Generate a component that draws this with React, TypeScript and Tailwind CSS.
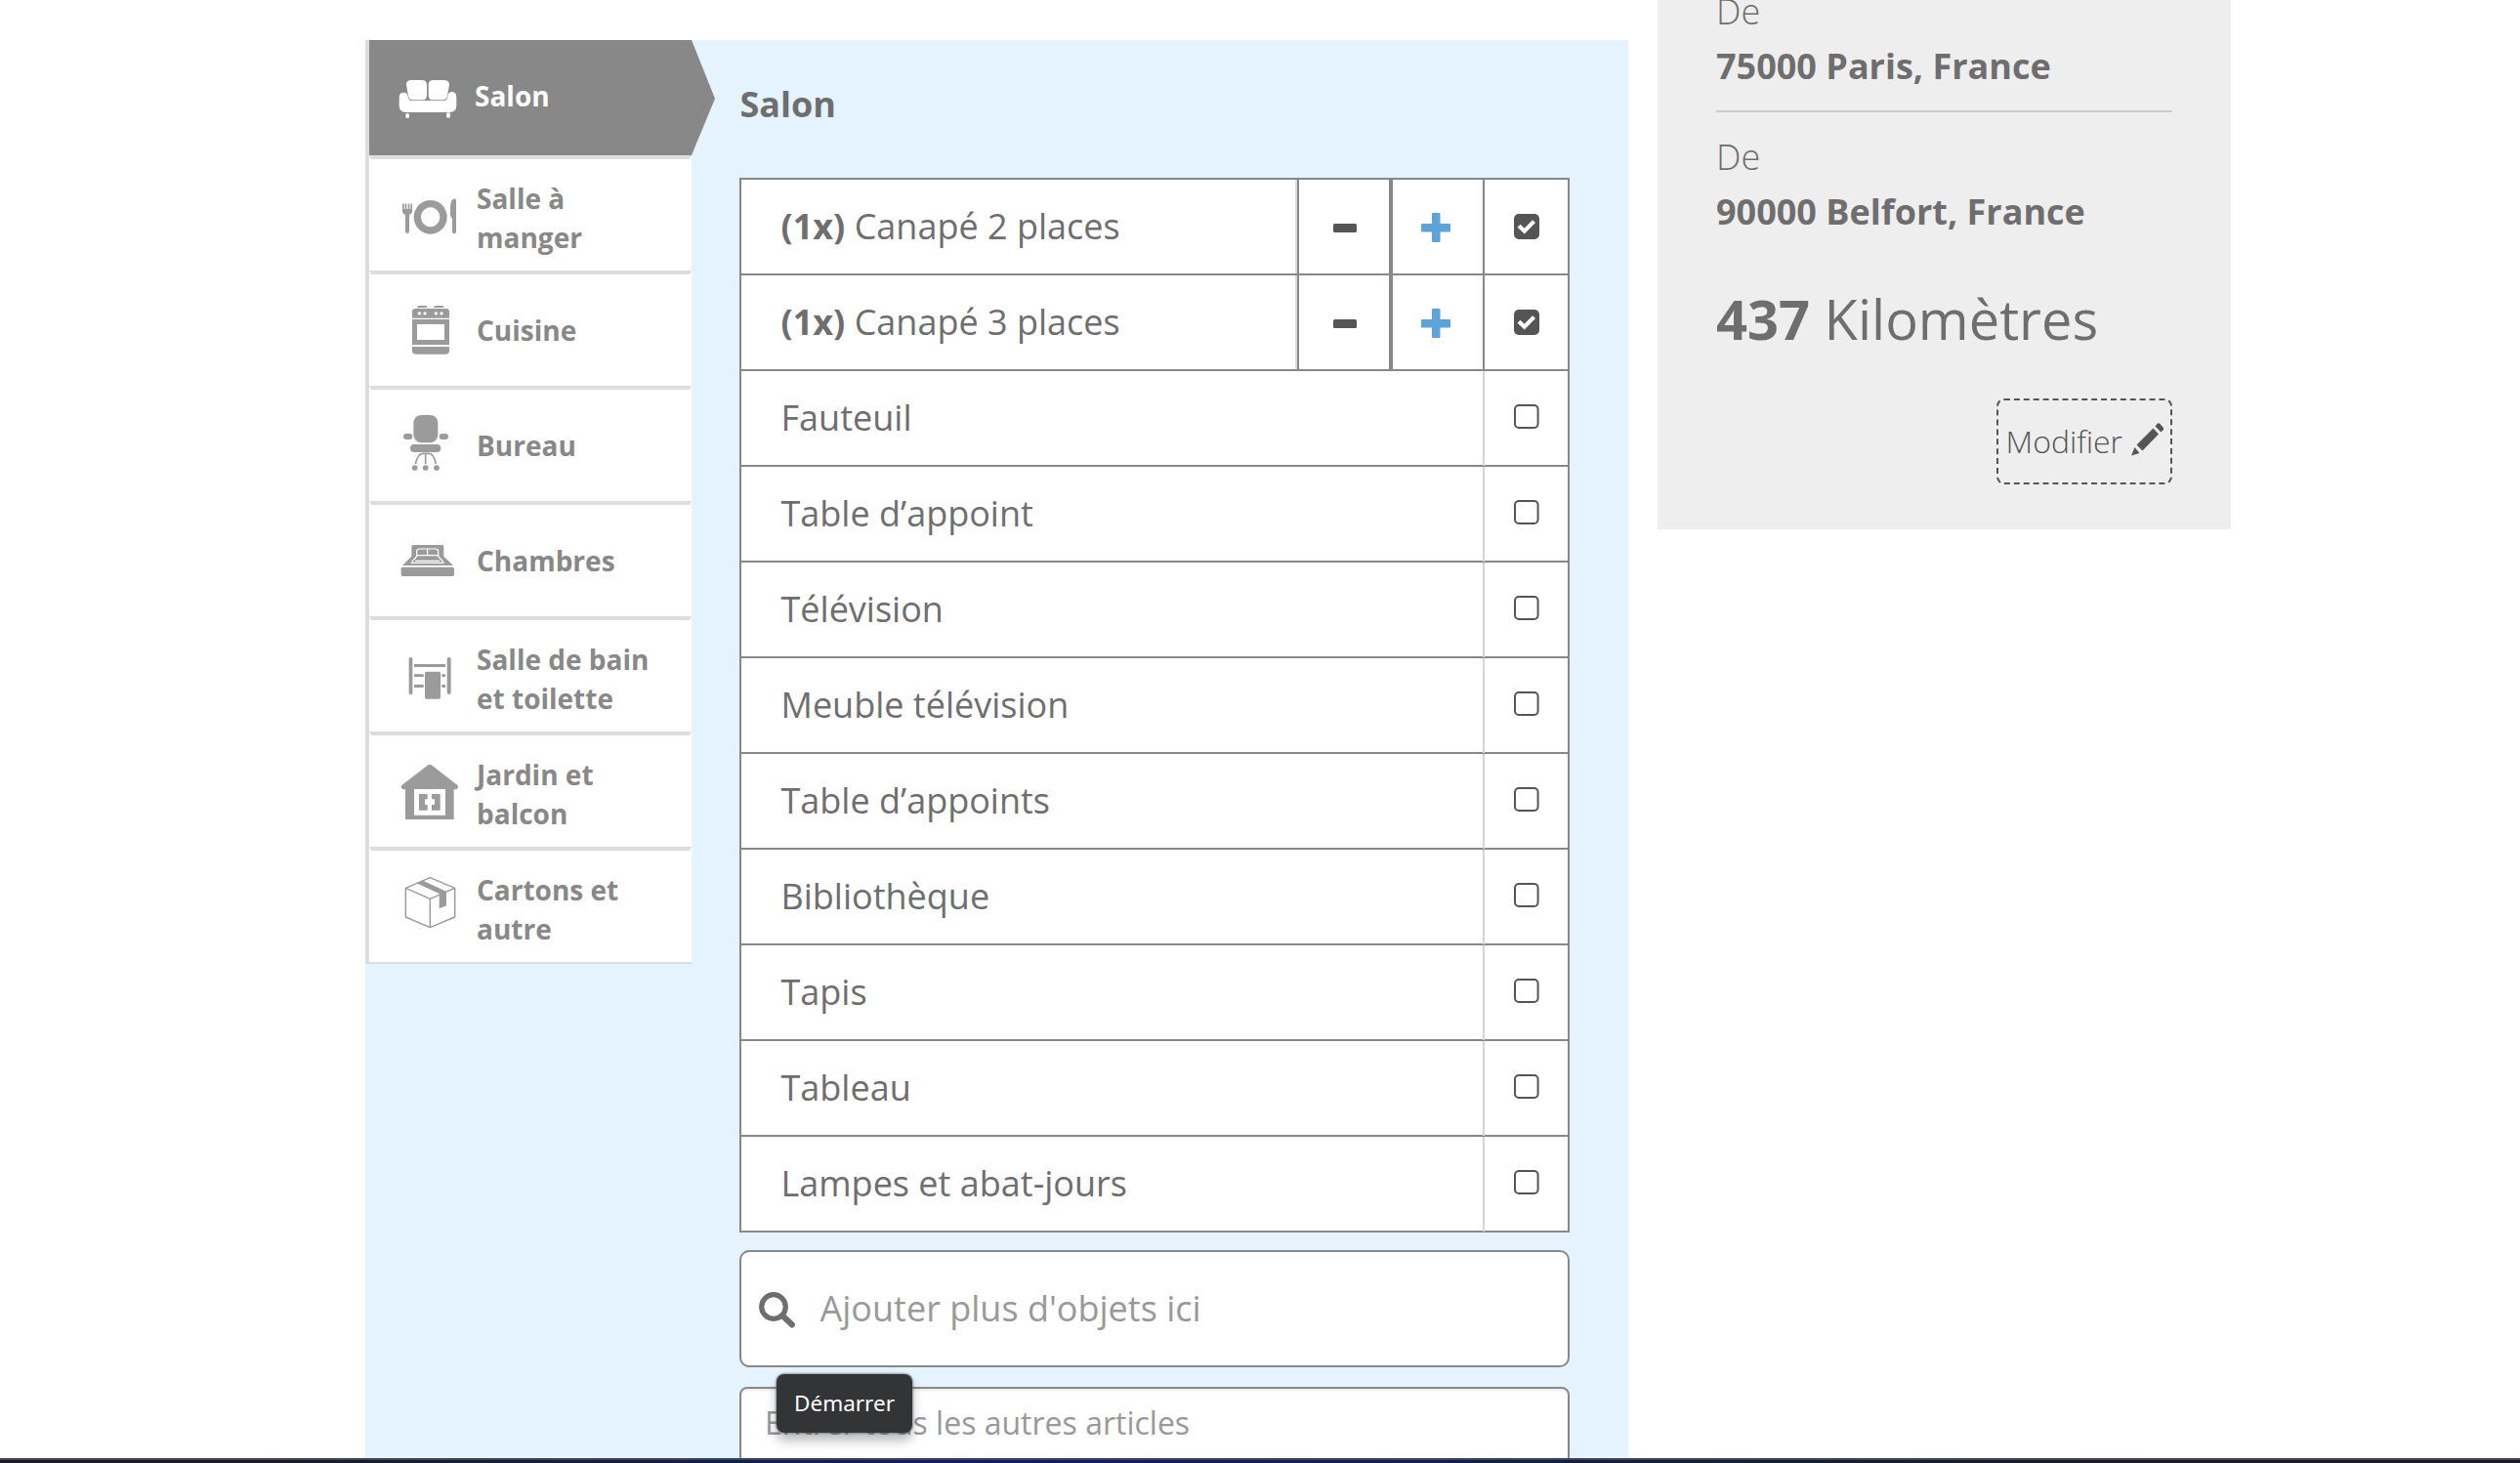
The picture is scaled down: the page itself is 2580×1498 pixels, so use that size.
import type { ReactNode } from "react";

type Room = { label: string[]; icon: ReactNode; viewBox: string };

const rooms: Room[] = [
  {
    label: ["Salle à", "manger"],
    viewBox: "90 399 270 342",
    icon: (
      <>
        <path d="M144 537q3-4 5 0v15h3v-15q3-4 5 0v15h4v-15q3-4 5 0v15h3v-15q3-4 5 0v22q0 8-9 11v52q-1 5-6 5t-6-5v-52q-9-3-9-11z" />
        <path fillRule="evenodd" d="M230 525a51 52 0 1 0 .1 0zM230 547a29 30 0 1 1-.1 0z" />
        <path d="M309 525v97q-1 6-6 6t-6-6v-41q-6-4-6-12v-20q0-26 11-28 7-1 7 4z" />
      </>
    ),
  },
  {
    label: ["Cuisine"],
    viewBox: "90 33 270 342",
    icon: (
      <>
        <path d="M189 135q1-6 6-6h20q5 0 6 6zM240 135q1-6 6-6h20q5 0 6 6z" />
        <path
          fillRule="evenodd"
          d="M184 138h94q10 0 10 10v19H174v-19q0-10 10-10zM196 148a5 5 0 1 0 .1 0zM213 148a5 5 0 1 0 .1 0zM247 148a5 5 0 1 0 .1 0zM264 148a5 5 0 1 0 .1 0zM174 171h114v78H174zM189 186v48h84v-48z"
        />
        <path d="M174 255h114v13q0 10-10 10h-94q-10 0-10-10z" />
      </>
    ),
  },
  {
    label: ["Bureau"],
    viewBox: "90 387 270 342",
    icon: (
      <>
        <rect x="178" y="465" width="75" height="85" rx="24" />
        <rect x="147" y="522" width="28" height="18" rx="9" />
        <rect x="257" y="522" width="28" height="18" rx="9" />
        <rect x="168" y="555" width="94" height="24" rx="12" />
        <path
          d="M184 615q8-32 22-32h20q14 0 21 32M215 583v32"
          fill="none"
          stroke="currentColor"
          strokeWidth="5"
        />
        <circle cx="182" cy="627" r="8.5" />
        <circle cx="215" cy="627" r="8.5" />
        <circle cx="249" cy="627" r="8.5" />
      </>
    ),
  },
  {
    label: ["Chambres"],
    viewBox: "90 51 270 342",
    icon: (
      <>
        <path d="M172 179q0-5 5-5h89q5 0 5 5v30l29 28H144l28-28z" />
        <path
          d="M170 229h102M173 226l15-17v-16q0-7 9-7h48q9 0 9 7v16l16 17M183 223h76M188 206h66M221 187v18"
          fill="none"
          stroke="#fff"
          strokeWidth="3.5"
        />
        <path d="M174 231h96v6h-96z" />
        <rect x="140" y="242" width="163" height="28" rx="5" />
      </>
    ),
  },
  {
    label: ["Salle de bain", "et toilette"],
    viewBox: "90 405 270 342",
    icon: (
      <>
        <rect x="164" y="519" width="11" height="114" rx="5.5" />
        <rect x="281" y="519" width="12" height="114" rx="6" />
        <path d="M180 540h96v9h-96zM180 571h29v8h-29zM180 603h29v9h-29zM265 571h11v8h-11zM265 603h11v9h-11z" />
        <rect x="213" y="563" width="48" height="84" rx="5" />
      </>
    ),
  },
  {
    label: ["Jardin et", "balcon"],
    viewBox: "90 39 270 342",
    icon: (
      <>
        <path
          fillRule="evenodd"
          d="M223 130q5-4 10 0l80 62q4 4 1 9-4 5-12 3v93H153v-93q-8 2-12-3-3-5 1-9zM180 204v80h96v-80z"
        />
        <path d="M195 219h26v16h-8v17h8v17h-26zM234 219h26v50h-26v-17h9v-17h-9z" />
      </>
    ),
  },
  {
    label: ["Cartons et", "autre"],
    viewBox: "90 393 270 342",
    icon: (
      <>
        <path
          d="M229 476l76 32v89l-76 32-75-32v-89zM154 508l75 33 76-33M229 541v88"
          fill="none"
          stroke="currentColor"
          strokeWidth="4.5"
          strokeLinejoin="round"
        />
        <path d="M187 493l20-8 72 33v44l-22 9v-46z" />
      </>
    ),
  },
];

const items = [
  { name: "Canapé 2 places", count: 1 },
  { name: "Canapé 3 places", count: 1 },
  { name: "Fauteuil", count: 0 },
  { name: "Table d’appoint", count: 0 },
  { name: "Télévision", count: 0 },
  { name: "Meuble télévision", count: 0 },
  { name: "Table d’appoints", count: 0 },
  { name: "Bibliothèque", count: 0 },
  { name: "Tapis", count: 0 },
  { name: "Tableau", count: 0 },
  { name: "Lampes et abat-jours", count: 0 },
];

function Sidebar() {
  return (
    <nav className="h-[946px] w-[334px] shrink-0 border-l-4 border-[#dddddd] text-[28px] leading-10 font-bold text-[#888888]">
      <div className="relative flex h-[118px] bg-[#888888] text-white">
        <svg className="ml-4 h-[118px] w-[90px]" viewBox="90 33 270 354" fill="currentColor">
          <path d="M172 156h32q15 0 15 15v32q0 14-14 14h-29q-12 0-14-12l-6-35q-1-14 16-14zM238 156h32q18 0 18 14l-6 35q-2 12-14 12h-30q-14 0-14-14v-32q0-15 14-15z" />
          <path d="M134 210q0-16 14-16 11 0 13 12 2 13 11 13h100q9 0 11-13 2-14 14-14 13 0 13 18v24q0 21-21 21H155q-21 0-21-21z" />
          <rect x="154" y="258" width="11" height="15" rx="5" />
          <rect x="279" y="256" width="12" height="16" rx="5" />
        </svg>
        <span className="ml-0.5 pt-[37px]">Salon</span>
        <svg className="absolute top-0 left-[330px] h-[118px] w-6" viewBox="0 0 24 118" fill="#888888">
          <path d="M0 0 24 60 0 118z" />
        </svg>
      </div>
      {rooms.map((room) => (
        <div
          key={room.label[0]}
          className="flex h-[118px] border-x-2 border-t-4 border-x-white border-t-[#dddddd] bg-white"
        >
          <svg
            className="ml-[14px] h-[114px] w-[90px] shrink-0 text-[#9b9b9b]"
            viewBox={room.viewBox}
            fill="currentColor"
          >
            {room.icon}
          </svg>
          <div className={room.label.length > 1 ? "ml-1 pt-5" : "ml-1 pt-[37px]"}>
            {room.label.map((line) => (
              <div key={line} className="whitespace-nowrap">
                {line}
              </div>
            ))}
          </div>
        </div>
      ))}
      <div className="h-0.5 bg-[#dddddd]" />
    </nav>
  );
}

function Checkbox({ checked }: { checked: boolean }) {
  if (!checked) {
    return (
      <svg className="mt-[34px] ml-[30px] h-[25px] w-[26px]" viewBox="0 0 26 25">
        <rect x="1" y="1" width="23.6" height="23" rx="4" fill="none" stroke="#555555" strokeWidth="2" />
      </svg>
    );
  }
  return (
    <svg className="mt-[35px] ml-[29.5px] size-[26px]" viewBox="0 0 26 26">
      <rect width="26" height="26" rx="5" fill="#555555" />
      <path d="M5 12.300 10.700 17.600 20.500 7.600" fill="none" stroke="#fff" strokeWidth="4.2" />
    </svg>
  );
}

function ItemRow({ name, count }: { name: string; count: number }) {
  const selected = count > 0;
  return (
    <div className="flex h-[98px] border-b-2 border-[#888888] bg-white">
      <div className="flex-1 pl-[40.5px] leading-[95px] whitespace-pre">
        {selected && <b>({count}x) </b>}
        {name}
      </div>
      {selected && (
        <>
          <div className="h-24 w-1 border-r-2 border-l-2 border-l-[#dddddd] border-r-[#888888]" />
          <div className="h-24 w-[92px]">
            <div className="mt-[45px] ml-[34.5px] h-[8.5px] w-[24.5px] rounded-[1.5px] bg-[#555555]" />
          </div>
          <div className="h-24 w-1 bg-[#888888]" />
          <div className="h-24 w-[92px]">
            <svg className="mt-[34px] ml-[29px] size-[30px]" viewBox="0 0 30 30" fill="#5da2d9">
              <rect x="11" width="8.5" height="30" rx="1" />
              <rect y="11" width="30" height="8.5" rx="1" />
            </svg>
          </div>
        </>
      )}
      <div className={selected ? "w-0.5 bg-[#888888]" : "-mb-px w-0.5 bg-[#d6d6d6]"} />
      <div className="w-[85px]">
        <Checkbox checked={selected} />
      </div>
    </div>
  );
}

function TripSummary() {
  return (
    <aside className="ml-[30px] h-[542px] w-[587px] overflow-hidden bg-[#eeeeee] px-[60px] text-[36px] leading-[56px] text-[#6e6e6e]">
      <div className="-mt-4 font-light">De</div>
      <div className="font-bold">75000 Paris, France</div>
      <div className="mt-[17px] h-0.5 bg-[#cccccc]" />
      <div className="mt-[18px] font-light">De</div>
      <div className="font-bold">90000 Belfort, France</div>
      <div className="mt-[53px] text-[56px]">
        <b>437</b> Kilomètres
      </div>
      <div className="mt-[54px] flex justify-end">
        <button className="flex h-[88px] w-[180px] items-center rounded-lg border-2 border-dashed border-[#555555] pl-[7.5px] text-[32px] font-light text-[#555555]">
          Modifier
          <svg className="-mt-1 ml-[9px] h-[34px] w-[34px]" viewBox="0 0 34 34" fill="#555555">
            <path d="M24.500 3.500 26.500 1q1.500-1.500 3 0l3 3.500q1.300 1.500 0 3L30.500 9.500zM22.500 5.500 28 11.500 11.500 28.500 5.500 22.500zM3.500 25 8.500 31 0 33.500z" />
          </svg>
        </button>
      </div>
    </aside>
  );
}

export default function App() {
  return (
    <div className="relative flex h-[1498px] w-[2580px] flex-col overflow-hidden bg-white font-['Open_Sans',sans-serif]">
      <div className="flex h-[1493px] items-start overflow-hidden pl-[374px]">
        <main className="mt-[41px] flex h-[1452px] w-[1293px] items-start overflow-hidden bg-[#e4f3fe]">
          <Sidebar />
          <section className="ml-[49px] w-[850px] text-[36px] text-[#6e6e6e]">
            <h1 className="h-[141px] pt-[41px] pl-[0.5px] leading-[50px] font-bold">Salon</h1>
            <div className="border-x-2 border-t-2 border-[#888888]">
              {items.map((item) => (
                <ItemRow key={item.name} {...item} />
              ))}
            </div>
            <div className="mt-[18px] flex h-[120px] items-center rounded-[10px] border-2 border-[#888888] bg-white text-[#999999]">
              <svg className="mt-0.5 ml-[18px] size-[37px]" viewBox="0 0 37 37" fill="none" stroke="#6e6e6e">
                <circle cx="15" cy="15" r="12.3" strokeWidth="5.2" />
                <path d="M24 24 34 33.500" strokeWidth="6" strokeLinecap="round" />
              </svg>
              <span className="ml-[25.5px]">Ajouter plus d'objets ici</span>
            </div>
            <div className="mt-5 h-[120px] rounded-lg border-2 border-[#888888] bg-white pt-3 pl-6 text-[32px] leading-[46px] text-[#999999] shadow-[inset_0_2px_2px_rgba(0,0,0,0.08)]">
              Entrer tous les autres articles
            </div>
          </section>
        </main>
        <TripSummary />
      </div>
      <div className="h-0.5 bg-linear-to-r from-[#41454a] from-10% via-[#38405c] via-40% to-[#41454a] to-85%" />
      <div className="h-[3px] bg-linear-to-r from-[#171c2b] from-12% via-[#101c64] via-40% to-[#171c2b] to-80%" />
      <div className="absolute top-[1407px] left-[795px] flex h-[60px] w-[139px] items-center justify-center rounded-lg bg-[#333436] font-['Noto_Sans',sans-serif] text-[22.5px] text-white shadow-[0_0_0_1.5px_rgba(90,100,110,0.4),0_8px_12px_rgba(0,0,0,0.28)]">
        Démarrer
      </div>
    </div>
  );
}
